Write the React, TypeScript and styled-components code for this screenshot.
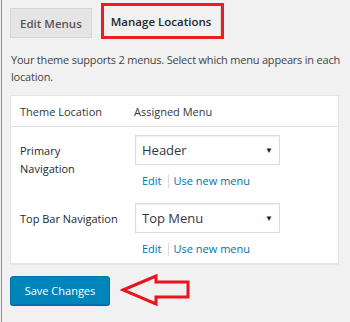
import React from "react";
import styled, { createGlobalStyle } from "styled-components";

const Global = createGlobalStyle`
  html, body { margin: 0; padding: 0; background: #f1f1f1; }
  body { font-family: "Open Sans", "Noto Sans", sans-serif; }
`;

const Page = styled.div`
  margin-left: 1px;
  border-left: 1px solid #8f8f8f;
  min-height: 322px;
  box-sizing: border-box;
  padding: 3px 10px 0 8px;
`;

const Tabs = styled.div`
  display: flex;
  align-items: flex-start;
  gap: 9px;
  height: 36px;
`;

const Tab = styled.div<{ $active?: boolean }>`
  box-sizing: border-box;
  display: flex;
  align-items: center;
  font-size: 11.5px;
  font-weight: 600;
  ${(p) =>
    p.$active
      ? `
    margin-left: 0;
    height: 36px;
    padding: 0 10px 0 7px;
    border: 3px solid #ea1c24;
    color: #23282d;
    background: #f1f1f1;
    box-shadow: inset -1px 0 0 #d9d9d9;
  `
      : `
    margin-top: 5px;
    height: 30px;
    padding: 0 9px;
    border: 1px solid #d6d6d6;
    background: #e5e5e5;
    color: #555;
  `}
`;

const Desc = styled.p`
  margin: 12px 0 0 1px;
  font-size: 11px;
  line-height: 17px;
  letter-spacing: -0.2px;
  color: #444;
  width: 335px;
`;

const Table = styled.div`
  margin-top: 10px;
  width: 329px;
  box-sizing: border-box;
  background: #fff;
  border: 1px solid #e5e5e5;
  box-shadow: 0 1px 1px rgba(0, 0, 0, 0.04);
`;

const HeadRow = styled.div`
  display: grid;
  grid-template-columns: 114px 1fr;
  height: 30px;
  align-items: center;
  border-bottom: 1px solid #e1e1e1;
  padding-left: 9px;
  font-size: 11px;
  color: #32373c;
`;

const Row = styled.div`
  display: grid;
  grid-template-columns: 115px 1fr;
  height: 68px;
  padding-left: 9px;
  box-sizing: border-box;
`;

const Label = styled.div`
  padding-top: 15px;
  font-size: 11px;
  line-height: 18px;
  color: #23282d;
`;

const Cell = styled.div`
  padding-top: 8px;
  display: flex;
  flex-direction: column;
`;

const Select = styled.div`
  box-sizing: border-box;
  width: 145px;
  height: 30px;
  border: 1px solid #ddd;
  box-shadow: inset 0 1px 2px rgba(0, 0, 0, 0.07);
  background: #fff;
  display: flex;
  align-items: center;
  justify-content: space-between;
  padding: 0 6px 0 6px;
  font-size: 13px;
  color: #32373c;
`;

const Caret = styled.span`
  font-size: 8px;
  color: #222;
  margin-top: -2px;
`;

const Links = styled.div`
  display: flex;
  align-items: center;
  margin-top: 8px;
  padding-left: 7px;
  font-size: 11px;
  line-height: 16px;
  color: #0073aa;
`;

const Sep = styled.span`
  width: 1px;
  height: 13px;
  background: #ddd;
  margin: 0 5px 0 6px;
`;

const Footer = styled.div`
  display: flex;
  align-items: center;
  gap: 10px;
  margin-top: 9px;
`;

const SaveButton = styled.button`
  box-sizing: border-box;
  width: 100px;
  height: 29px;
  margin-left: 0;
  background: #0085ba;
  border: 1px solid #0073aa;
  border-radius: 3px;
  box-shadow: 0 1px 0 #006799;
  color: #fff;
  font-family: "Open Sans", "Noto Sans", sans-serif;
  font-size: 11px;
  padding: 0;
`;

const locations = [
  { label: ["Primary", "Navigation"], menu: "Header" },
  { label: ["Top Bar Navigation"], menu: "Top Menu" },
];

export default function App() {
  return (
    <>
      <Global />
      <Page>
        <Tabs>
          <Tab>Edit Menus</Tab>
          <Tab $active>Manage Locations</Tab>
        </Tabs>
        <Desc>
          Your theme supports 2 menus. Select which menu appears in each
          location.
        </Desc>
        <Table>
          <HeadRow>
            <span>Theme Location</span>
            <span>Assigned Menu</span>
          </HeadRow>
          {locations.map((l) => (
            <Row key={l.menu}>
              <Label>
                {l.label.map((t, i) => (
                  <React.Fragment key={t}>
                    {i > 0 && <br />}
                    {t}
                  </React.Fragment>
                ))}
              </Label>
              <Cell>
                <Select>
                  <span>{l.menu}</span>
                  <Caret>▼</Caret>
                </Select>
                <Links>
                  <span>Edit</span>
                  <Sep />
                  <span>Use new menu</span>
                </Links>
              </Cell>
            </Row>
          ))}
        </Table>
        <Footer>
          <SaveButton>Save Changes</SaveButton>
          <svg width="72" height="34" viewBox="0 0 72 34">
            <polygon
              points="3,17 36,3 36,9 68,9 68,24 36,24 36,31"
              fill="none"
              stroke="#e8141f"
              strokeWidth="3"
              strokeLinejoin="miter"
            />
          </svg>
        </Footer>
      </Page>
    </>
  );
}
